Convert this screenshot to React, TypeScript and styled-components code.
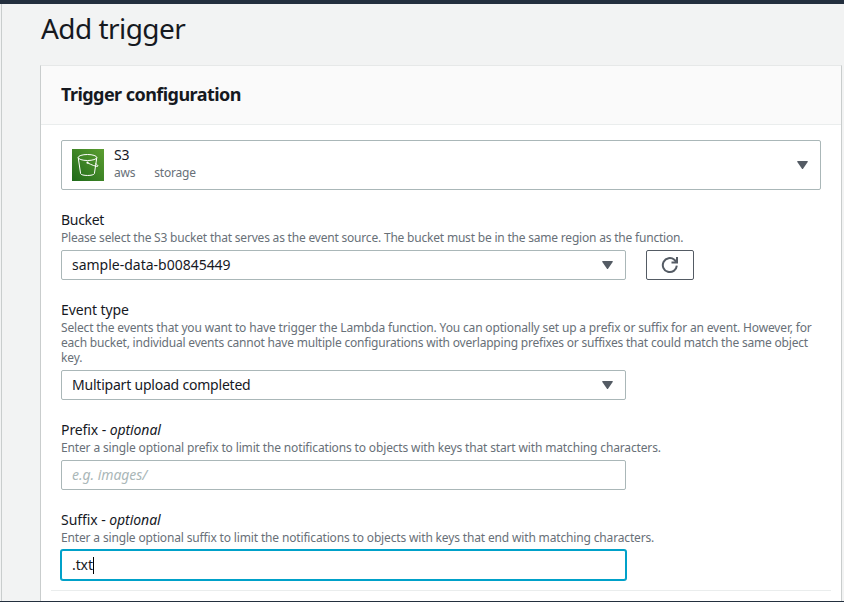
import React from "react";
import styled, { createGlobalStyle, css } from "styled-components";

const GlobalStyle = createGlobalStyle`
  * { box-sizing: border-box; }
  body { margin: 0; overflow: hidden; background: #f2f3f3; }
`;

const Page = styled.div`
  height: 602px;
  display: flex;
  flex-direction: column;
  border-top: 4px solid #232f3e;
  border-bottom: 1px solid #232f3e;
  background: #f2f3f3;
  color: #16191f;
  font-family: "Noto Sans", "Open Sans", sans-serif;
  font-size: 14px;
  line-height: 20px;
  overflow: hidden;
`;

const Content = styled.main`
  flex: 1;
  min-height: 0;
  margin-left: 1px;
  padding: 0 2px 0 39px;
  border-left: 1px solid #c9cdcd;
  display: flex;
  flex-direction: column;
`;

const Text = styled.span<{ $track?: number }>`
  display: block;
  letter-spacing: ${(p) => p.$track ?? 0}px;
  white-space: nowrap;
`;

const Title = styled.h1`
  margin: 0;
  height: 61px;
  padding-top: 6px;
  font-size: 28px;
  line-height: 36px;
  font-weight: 400;
`;

const Card = styled.section`
  flex: 1;
  margin-left: -1px;
  background: #fff;
  border: 1px solid #c9cdcd;
  border-top-color: #e6e8e8;
  border-bottom: 0;
`;

const CardHeader = styled.header`
  height: 59px;
  padding: 16px 20px 0;
  background: #fafafa;
  border-bottom: 1px solid #eaeded;
`;

const CardTitle = styled.h2`
  margin: 0;
  font-size: 18px;
  line-height: 24px;
  font-weight: 700;
`;

const Form = styled.div`
  display: flex;
  flex-direction: column;
  gap: 20px;
  padding: 15px 20px 0;
`;

const box = css`
  display: flex;
  align-items: center;
  background: #fff;
  border: 1px solid #aab7b8;
  border-radius: 2px;
`;

const ServiceSelect = styled.div`
  ${box}
  height: 50px;
  padding: 0 12px 0 10px;
`;

const ServiceInfo = styled.div`
  flex: 1;
  margin-left: 10px;
  height: 40px;
`;

const ServiceName = styled.div`
  line-height: 20px;
`;

const Tags = styled.div`
  display: flex;
  gap: 19px;
  color: #687078;
  font-size: 12px;
  line-height: 15px;
`;

const Field = styled.div`
  display: flex;
  flex-direction: column;
`;

const Label = styled.label`
  height: 20px;
`;

const Help = styled.p`
  display: flex;
  flex-direction: column;
  margin: 0 0 5px;
  color: #687078;
  font-size: 12px;
  line-height: 15px;
`;

const ControlRow = styled.div`
  display: flex;
  gap: 20px;
`;

const Control = styled.div<{ $focused?: boolean }>`
  ${box}
  justify-content: space-between;
  width: 565px;
  height: 30px;
  padding: 0 12px 0 10px;
  ${(p) => p.$focused && css`
    border-color: #00a1c9;
    box-shadow: 0 0 0 1px #00a1c9;
  `}
`;

const Typed = styled.span`
  display: flex;
  align-items: center;
`;

const Caret = styled.span`
  width: 1px;
  height: 17px;
  background: #000;
`;

const Placeholder = styled.span`
  color: #aab7b8;
  font-style: italic;
`;

const RefreshButton = styled.button`
  ${box}
  justify-content: center;
  width: 48px;
  height: 30px;
  padding: 0;
  border-color: #545b64;
`;

const Divider = styled.hr`
  width: calc(100% - 20px);
  height: 1px;
  margin: 10px 10px 0;
  border: 0;
  background: #eaeded;
`;

const Arrow = () => (
  <svg width="11" height="8" viewBox="0 0 11 8">
    <path d="M.3 0h10.4v1L5.9 8h-.8L.3 1z" fill="#545b64" />
  </svg>
);

const RefreshIcon = () => (
  <svg width="18" height="18" viewBox="0 0 18 18" fill="none" stroke="#545b64" strokeWidth="2">
    <path d="M15.8 9.600a7 7 0 1 1-2.400-5.800l2 2.200" />
    <path d="M16 1v5.500h-5.500" />
  </svg>
);

const BucketIcon = () => (
  <svg width="32" height="32" viewBox="0 0 32 32">
    <defs>
      <linearGradient id="s3-green" x1="0" y1="1" x2="1" y2="0">
        <stop offset="0" stopColor="#1f6a1a" />
        <stop offset="1" stopColor="#5c9e31" />
      </linearGradient>
    </defs>
    <rect width="32" height="32" fill="url(#s3-green)" />
    <g fill="none" stroke="#fff" strokeWidth="1" strokeLinejoin="round">
      <ellipse cx="15.5" cy="8.500" rx="9.300" ry="3" />
      <path d="M6.200 8.500 8.600 24.600c.5 2.500 13.300 2.500 13.800 0L24.800 8.500" />
      <path d="M15.500 13.800c3.800 2 8.500 3.900 10.200 3.500.9-.5-.7-1.900-2.300-2.800" />
    </g>
    <circle cx="15.500" cy="13.700" r="1.100" fill="#fff" />
  </svg>
);

type Line = [text: string, track: number];

const HelpText = ({ lines }: { lines: Line[] }) => (
  <Help>
    {lines.map(([text, track]) => (
      <Text key={text} $track={track}>{text}</Text>
    ))}
  </Help>
);

export default function App() {
  return (
    <>
      <GlobalStyle />
      <Page>
        <Content>
          <Title><Text $track={-0.55}>Add trigger</Text></Title>
          <Card>
            <CardHeader>
              <CardTitle><Text $track={-0.55}>Trigger configuration</Text></CardTitle>
            </CardHeader>
            <Form>
              <ServiceSelect>
                <BucketIcon />
                <ServiceInfo>
                  <ServiceName><Text $track={-0.1}>S3</Text></ServiceName>
                  <Tags><Text $track={-0.2}>aws</Text><Text $track={-0.2}>storage</Text></Tags>
                </ServiceInfo>
                <Arrow />
              </ServiceSelect>
              <Field>
                <Label><Text $track={-0.3}>Bucket</Text></Label>
                <HelpText lines={[["Please select the S3 bucket that serves as the event source. The bucket must be in the same region as the function.", -0.2]]} />
                <ControlRow>
                  <Control><Text $track={-0.01}>sample-data-b00845449</Text><Arrow /></Control>
                  <RefreshButton aria-label="Refresh"><RefreshIcon /></RefreshButton>
                </ControlRow>
              </Field>
              <Field>
                <Label><Text $track={-0.1}>Event type</Text></Label>
                <HelpText
                  lines={[
                    ["Select the events that you want to have trigger the Lambda function. You can optionally set up a prefix or suffix for an event. However, for", -0.157],
                    ["each bucket, individual events cannot have multiple configurations with overlapping prefixes or suffixes that could match the same object", -0.2],
                    ["key.", -0.1],
                  ]}
                />
                <Control><Text $track={-0.21}>Multipart upload completed</Text><Arrow /></Control>
              </Field>
              <Field>
                <Label><Text $track={-0.09}>Prefix - <em>optional</em></Text></Label>
                <HelpText lines={[["Enter a single optional prefix to limit the notifications to objects with keys that start with matching characters.", -0.147]]} />
                <Control><Placeholder><Text $track={-0.05}>e.g. images/</Text></Placeholder></Control>
              </Field>
              <Field>
                <Label><Text $track={-0.06}>Suffix - <em>optional</em></Text></Label>
                <HelpText lines={[["Enter a single optional suffix to limit the notifications to objects with keys that end with matching characters.", -0.155]]} />
                <Control $focused><Typed><Text $track={-0.1}>.txt</Text><Caret /></Typed></Control>
              </Field>
            </Form>
            <Divider />
          </Card>
        </Content>
      </Page>
    </>
  );
}
